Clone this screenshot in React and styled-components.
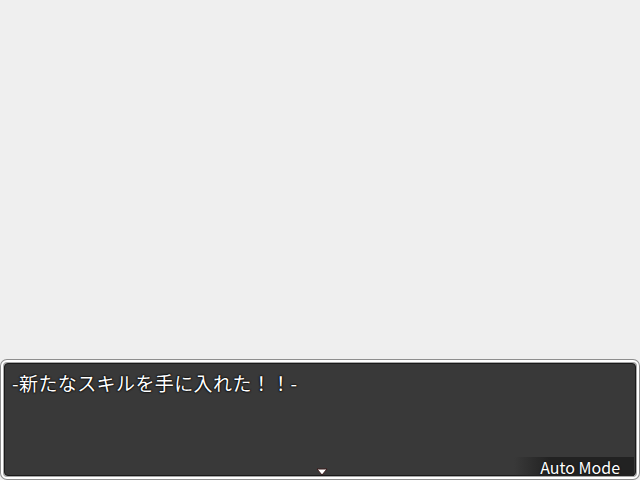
import styled, { createGlobalStyle } from "styled-components";

const Global = createGlobalStyle`
  html, body {
    margin: 0;
    padding: 0;
    background: #efefef;
  }
  #root {
    width: 640px;
    height: 480px;
  }
`;

const Screen = styled.div`
  width: 640px;
  height: 480px;
  display: flex;
  flex-direction: column;
  justify-content: flex-end;
  background: #efefef;
  overflow: hidden;
`;

// 메시지 창
const MessageWindow = styled.div`
  position: relative;
  height: 119px;
  margin: 0 1px 1px 1px;
  border: 2px solid #ffffff;
  border-radius: 6px;
  padding: 1px;
  background: #a8a8a8;
  box-sizing: border-box;
  box-shadow: 0 0 0 1px #8e8e8e;
  display: flex;
`;

const Inner = styled.div`
  flex: 1;
  background: #393939;
  border: 1px solid #1a1a1a;
  border-radius: 4px;
  padding: 6px 7px;
  box-sizing: border-box;
`;

const Line = styled.div`
  color: #ffffff;
  font-family: "Noto Sans CJK JP", "Noto Sans", sans-serif;
  font-size: 19px;
  line-height: 26px;
  letter-spacing: 0.4px;
  text-shadow: 0 0 1px #000, 0 0 2px #000, 0 0 2px #000;
`;

const PauseArrow = styled.svg`
  position: absolute;
  left: 313px;
  bottom: 1px;
`;

const AutoBadge = styled.div`
  position: absolute;
  right: 3px;
  bottom: 1px;
  height: 19px;
  width: 120px;
  display: flex;
  align-items: center;
  justify-content: flex-end;
  padding-right: 14px;
  box-sizing: border-box;
  background: linear-gradient(to right, rgba(30, 30, 30, 0), #222 30%, #222);
  color: #ffffff;
  font-family: "Noto Sans CJK JP", "Noto Sans", sans-serif;
  font-size: 16px;
  text-shadow: 0 0 2px #000;
`;

export default function App() {
  return (
    <Screen>
      <Global />
      <MessageWindow>
        <Inner>
          <Line>-新たなスキルを手に入れた！！-</Line>
        </Inner>
        <PauseArrow width="12" height="8" viewBox="0 0 12 8">
          <path d="M1 1 L11 1 L6 7 Z" fill="#ffffff" stroke="#3a1a1a" strokeWidth="1" />
        </PauseArrow>
        <AutoBadge>Auto Mode</AutoBadge>
      </MessageWindow>
    </Screen>
  );
}
